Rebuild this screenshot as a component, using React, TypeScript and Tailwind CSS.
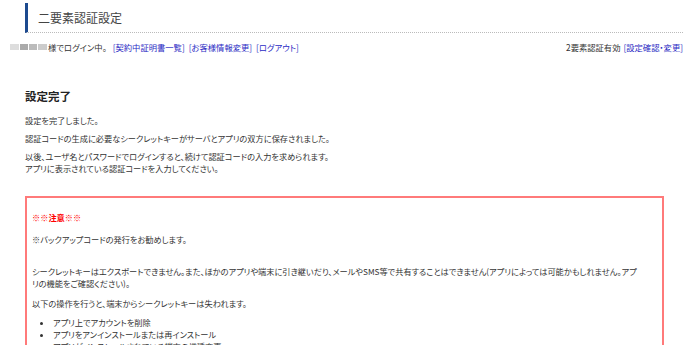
const font = "font-['Noto_Sans_CJK_JP','Noto_Sans',sans-serif] [font-feature-settings:'palt']";

function LinkText({ children }: { children: string }) {
  return <span className="text-[#2b2bc4]">[{children}]</span>;
}

export default function App() {
  return (
    <div className={`h-[345px] w-[700px] overflow-hidden bg-white text-[#333] ${font}`}>
      <div className="ml-[25px] mr-[17px] mt-[3px] flex h-[30px] items-center border-b border-l-[3px] border-dotted border-b-[#bbb] border-l-[#1d4a8f] pl-[10px] [border-left-style:solid]">
        <h1 className="text-[12px] leading-none text-[#444]">二要素認証設定</h1>
      </div>

      <div className="mt-[9px] flex items-center justify-between pl-[10px] pr-[17px] text-[8.3px] leading-[10px]">
        <div className="flex items-center">
          <span className="mr-[1px] flex h-[7px] items-center gap-[1px] blur-[0.6px]">
            <span className="h-[6px] w-[9px] bg-[#ddd]" />
            <span className="h-[6px] w-[8px] bg-[#aaa]" />
            <span className="h-[6px] w-[8px] bg-[#bbb]" />
            <span className="h-[6px] w-[9px] bg-[#ccc]" />
          </span>
          <span>様でログイン中。</span>
          <span className="ml-[6px] flex gap-[4px]">
            <LinkText>契約中証明書一覧</LinkText>
            <LinkText>お客様情報変更</LinkText>
            <LinkText>ログアウト</LinkText>
          </span>
        </div>
        <div className="flex gap-[3px]">
          <span>2要素認証有効</span>
          <LinkText>設定確認・変更</LinkText>
        </div>
      </div>

      <div className="ml-[25px] mr-[36px]">
        <h2 className="mt-[37px] text-[11.5px] font-bold leading-[14px] text-[#222]">設定完了</h2>
        <div className="mt-[11px] flex flex-col gap-[6px] text-[8.2px] leading-[12px]">
          <p>設定を完了しました。</p>
          <p>認証コードの生成に必要なシークレットキーがサーバとアプリの双方に保存されました。</p>
          <p>
            以後、ユーザ名とパスワードでログインすると、続けて認証コードの入力を求められます。
            <br />
            アプリに表示されている認証コードを入力してください。
          </p>
        </div>

        <div className="mt-[22px] border-2 border-[#ff7a7a] px-[5px] pt-[13px] pb-[10px] text-[8.2px] leading-[12px]">
          <p className="text-[#f00]">
            ※※<span className="font-bold">注意</span>※※
          </p>
          <p className="mt-[10px]">※バックアップコードの発行をお勧めします。</p>
          <p className="mt-[20px] pr-[14px]">
            シークレットキーはエクスポートできません。また、ほかのアプリや端末に引き継いだり、メールやSMS等で共有することはできません(アプリによっては可能かもしれません。アプリの機能をご確認ください)。
          </p>
          <p className="mt-[8px]">以下の操作を行うと、端末からシークレットキーは失われます。</p>
          <ul className="mt-[7px] list-disc pl-[21px]">
            <li>アプリ上でアカウントを削除</li>
            <li>アプリをアンインストールまたは再インストール</li>
            <li>アプリがインストールされている端末の機種変更</li>
          </ul>
        </div>
      </div>
    </div>
  );
}
